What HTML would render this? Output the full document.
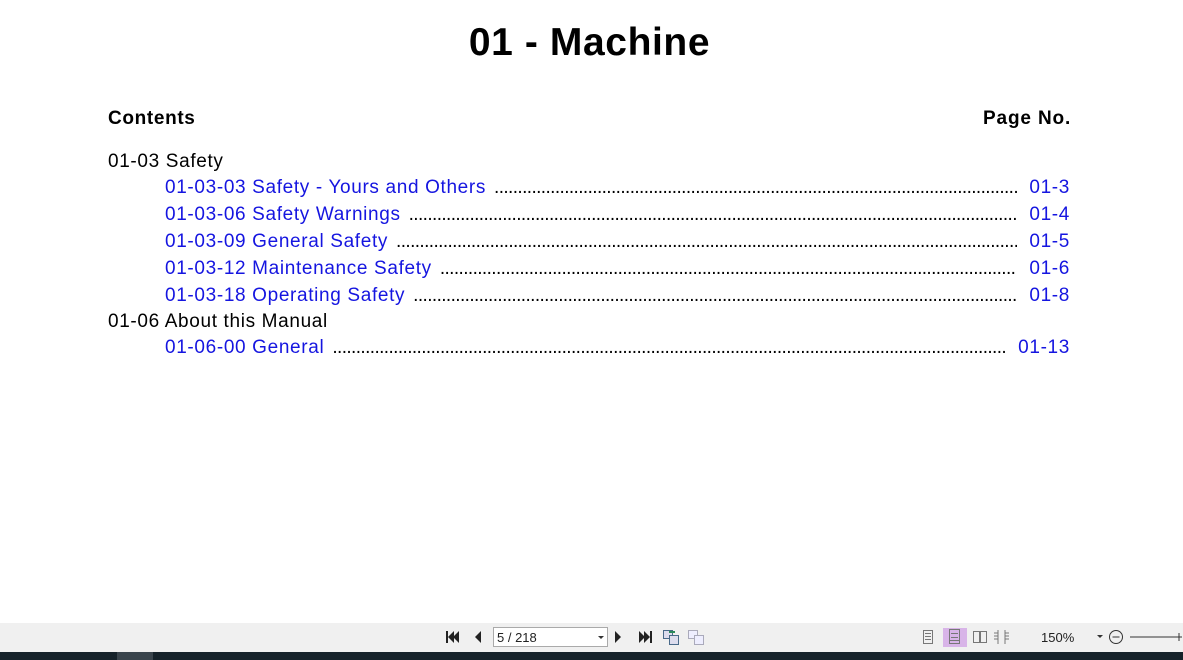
<!DOCTYPE html>
<html><head><style>
body{margin:0;width:1183px;height:660px;overflow:hidden;background:#fff;font-family:"Liberation Sans",Arial,sans-serif;position:relative}
.t{position:absolute;white-space:nowrap;font-size:19px;line-height:22px;letter-spacing:0.65px}
h1{position:absolute;left:0;width:1179px;text-align:center;top:20px;margin:0;font-size:39px;line-height:46px;font-weight:bold;letter-spacing:0.6px}
.row{position:absolute;left:165px;width:905px;height:22px;font-size:19px;line-height:22px;color:#1515e0;display:flex;white-space:nowrap;letter-spacing:0.65px}
.row .d{flex:1;overflow:hidden;margin:0 12px 0 8px;color:#000;letter-spacing:-0.6px;font-size:19px}
.row .d::before{content:"........................................................................................................................................................................................................................................"}
.tb{position:absolute;left:0;top:623px;width:1183px;height:29px;background:#f0f0f0}
.dk{position:absolute;left:0;top:652px;width:1183px;height:8px;background:#16222a}
.ic{position:absolute}
</style></head><body>
<h1>01 - Machine</h1>
<div class="t" style="left:108px;top:108px;font-weight:bold">Contents</div>
<div class="t" style="left:983px;top:108px;font-weight:bold;letter-spacing:0.85px">Page No.</div>
<div class="t" style="left:108px;top:151px">01-03 Safety</div>
<div class="row" style="top:177px"><span>01-03-03 Safety - Yours and Others</span><span class="d"></span><span>01-3</span></div>
<div class="row" style="top:204px"><span>01-03-06 Safety Warnings</span><span class="d"></span><span>01-4</span></div>
<div class="row" style="top:231px"><span>01-03-09 General Safety</span><span class="d"></span><span>01-5</span></div>
<div class="row" style="top:258px"><span>01-03-12 Maintenance Safety</span><span class="d"></span><span>01-6</span></div>
<div class="row" style="top:285px"><span>01-03-18 Operating Safety</span><span class="d"></span><span>01-8</span></div>
<div class="t" style="left:108px;top:311px">01-06 About this Manual</div>
<div class="row" style="top:337px"><span>01-06-00 General</span><span class="d"></span><span>01-13</span></div>
<div class="tb"></div>
<div class="dk"></div>
<div style="position:absolute;left:117px;top:652px;width:36px;height:8px;background:#3a444c"></div>
<svg class="ic" style="left:440px;top:623px" width="300" height="29">
<g fill="#222">
<rect x="6" y="8" width="2" height="12"/><polygon points="14,8 8,14 14,20"/><polygon points="19,8 13,14 19,20"/>
<polygon points="41,8 35,14 41,20"/>
<polygon points="175,8 181,14 175,20"/>
<polygon points="199,8 205,14 199,20"/><polygon points="204,8 210,14 204,20"/><rect x="210" y="8" width="2" height="12"/>
</g>
<rect x="53.5" y="4.5" width="114" height="19" fill="#fff" stroke="#aaa"/>
<text x="57" y="19" font-family="Liberation Sans,Arial" font-size="13" fill="#222">5 / 218</text>
<polygon points="158,13 164,13 161,16" fill="#333"/>
<g stroke="#4a6a8a" fill="#dde"><rect x="223.5" y="7.5" width="9" height="8"/><rect x="229.5" y="12.5" width="9" height="9"/></g>
<path d="M229 9h6" stroke="#2a8a5a" stroke-width="2"/>
<g stroke="#aab" fill="#eef"><rect x="248.5" y="7.5" width="9" height="8"/><rect x="254.5" y="12.5" width="9" height="9"/></g>
</svg>
<svg class="ic" style="left:900px;top:623px" width="283" height="29">
<rect x="43" y="5" width="24" height="19" fill="#d8b4e8"/>
<g fill="none" stroke="#777">
<rect x="23.5" y="7.5" width="9" height="13"/><path d="M25 10.5h6M25 13.5h6M25 16.5h6"/>
<rect x="49.5" y="6.5" width="10" height="14"/><path d="M51 10.5h7M51 14.5h7M49.5 17.5h10"/>
<rect x="73.5" y="8.5" width="6" height="11"/><rect x="80.5" y="8.5" width="6" height="11"/>
<path d="M98 7v14M105 7v14M98 10h-4M98 13h-4M98 16h-4M105 10h4M105 13h4M105 16h4"/>
<circle cx="216" cy="14" r="6.5" stroke="#333"/><path d="M212.5 14h7M230 14h52M279 10v8" stroke="#333"/>
</g>
<text x="141" y="19" font-family="Liberation Sans,Arial" font-size="13" fill="#222">150%</text>
<polygon points="197,12 203,12 200,15" fill="#333"/>
</svg>
</body></html>
